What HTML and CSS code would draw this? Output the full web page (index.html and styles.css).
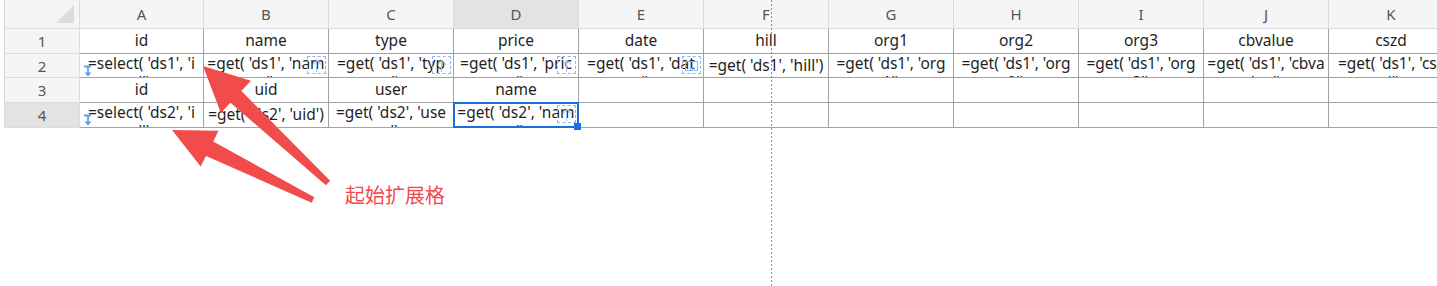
FILE: index.html
```html
<!DOCTYPE html>
<html lang="zh-CN">
<head>
<meta charset="utf-8">
<title>Sheet</title>
<link rel="stylesheet" href="styles.css">
</head>
<body>
<div class="sheet">
  <div class="grid">
    <!-- column header row -->
    <div class="corner"><span class="tri"></span></div>
    <div class="ch">A</div>
    <div class="ch">B</div>
    <div class="ch">C</div>
    <div class="ch sel">D</div>
    <div class="ch">E</div>
    <div class="ch">F</div>
    <div class="ch">G</div>
    <div class="ch">H</div>
    <div class="ch">I</div>
    <div class="ch">J</div>
    <div class="ch">K</div>

    <!-- row 1 -->
    <div class="rh">1</div>
    <div class="c">id</div>
    <div class="c">name</div>
    <div class="c">type</div>
    <div class="c">price</div>
    <div class="c">date</div>
    <div class="c">hill</div>
    <div class="c">org1</div>
    <div class="c">org2</div>
    <div class="c">org3</div>
    <div class="c">cbvalue</div>
    <div class="c">cszd</div>

    <!-- row 2 -->
    <div class="rh">2</div>
    <div class="c w"><span class="down"><svg width="10" height="12" viewBox="0 0 10 12"><path d="M1 1.5H8M5 1.5V8" stroke="#5c9ded" stroke-width="1.8" fill="none"/><path d="M1.5 7.5L5 11.5L8.5 7.5Z" fill="#5c9ded"/></svg></span><span class="l">=select( 'ds1', 'i</span><span class="l">d')</span></div>
    <div class="c w"><span class="fx up"></span><span class="l">=get( 'ds1', 'nam</span><span class="l">e')</span></div>
    <div class="c w"><span class="fx up"></span><span class="l">=get( 'ds1', 'typ</span><span class="l">e')</span></div>
    <div class="c w"><span class="fx up"></span><span class="l">=get( 'ds1', 'pric</span><span class="l">e')</span></div>
    <div class="c w"><span class="fx lr"></span><span class="l">=get( 'ds1', 'dat</span><span class="l">e')</span></div>
    <div class="c">=get( 'ds1', 'hill')</div>
    <div class="c w"><span class="l">=get( 'ds1', 'org</span><span class="l">1')</span></div>
    <div class="c w"><span class="l">=get( 'ds1', 'org</span><span class="l">2')</span></div>
    <div class="c w"><span class="l">=get( 'ds1', 'org</span><span class="l">3')</span></div>
    <div class="c w"><span class="l">=get( 'ds1', 'cbva</span><span class="l">lue')</span></div>
    <div class="c w"><span class="l">=get( 'ds1', 'csz</span><span class="l">d')</span></div>

    <!-- row 3 -->
    <div class="rh">3</div>
    <div class="c">id</div>
    <div class="c">uid</div>
    <div class="c">user</div>
    <div class="c">name</div>
    <div class="c"></div>
    <div class="c"></div>
    <div class="c"></div>
    <div class="c"></div>
    <div class="c"></div>
    <div class="c"></div>
    <div class="c"></div>

    <!-- row 4 -->
    <div class="rh sel">4</div>
    <div class="c w"><span class="down"><svg width="10" height="12" viewBox="0 0 10 12"><path d="M1 1.5H8M5 1.5V8" stroke="#5c9ded" stroke-width="1.8" fill="none"/><path d="M1.5 7.5L5 11.5L8.5 7.5Z" fill="#5c9ded"/></svg></span><span class="l">=select( 'ds2', 'i</span><span class="l">d')</span></div>
    <div class="c">=get( 'ds2', 'uid')</div>
    <div class="c w"><span class="l">=get( 'ds2', 'use</span><span class="l">r')</span></div>
    <div class="c w active"><div class="clip"><span class="fx up"></span><span class="l">=get( 'ds2', 'nam</span><span class="l">e')</span></div><span class="selbox"><span class="handle"></span></span></div>
    <div class="c"></div>
    <div class="c"></div>
    <div class="c"></div>
    <div class="c"></div>
    <div class="c"></div>
    <div class="c"></div>
    <div class="c"></div>
  </div>

  <div class="pagebreak"></div>

  <svg class="annot" width="1437" height="286" viewBox="0 0 1437 286">
    <polygon fill="#f24b4b" points="203,66 250.9,80.7 241.4,90.9 330.1,180.8 325.9,185.2 230.4,102.7 220.9,112.9"/>
    <polygon fill="#f24b4b" points="172,130 218.5,130.8 213.2,141.5 314.3,197.3 311.7,202.7 206,155.9 200.7,166.6"/>
  </svg>
  <div class="label">起始扩展格</div>
</div>
</body>
</html>
```

FILE: styles.css
```css
* { box-sizing: border-box; }

html, body {
  margin: 0;
  padding: 0;
  background: #ffffff;
}

body {
  width: 1437px;
  height: 286px;
  overflow: hidden;
  font-family: "Noto Sans", "Noto Sans CJK SC", sans-serif;
}

.sheet {
  position: relative;
  width: 1437px;
  height: 286px;
  overflow: hidden;
  padding-left: 4px;
}

.grid {
  display: grid;
  grid-template-columns: 75px 124px repeat(10, 125px);
  grid-template-rows: 29px 25px 24px 25px 25px;
  width: 1449px;
  border-left: 1px solid #d9d9d9;
}

.corner,
.ch,
.rh {
  background: #f5f5f5;
  border-right: 1px solid #dcdcdc;
  border-bottom: 1px solid #dcdcdc;
  color: #555555;
  font-size: 15px;
  display: flex;
  align-items: center;
  justify-content: center;
}

.corner {
  position: relative;
}

.tri {
  position: absolute;
  right: 5px;
  bottom: 5px;
  width: 0;
  height: 0;
  border-left: 18px solid transparent;
  border-bottom: 18px solid #dcdcdc;
}

.ch.sel,
.rh.sel {
  background: #e3e3e3;
}

.c {
  position: relative;
  border-right: 1px solid #a3a3a3;
  border-bottom: 1px solid #a3a3a3;
  color: #1f1f1f;
  font-size: 15.5px;
  line-height: 23px;
  text-align: center;
  white-space: nowrap;
  overflow: hidden;
}

.c.w {
  line-height: 18.5px;
}

.c.active {
  overflow: visible;
}

.clip {
  position: relative;
  height: 100%;
  overflow: hidden;
}

.l {
  display: block;
  white-space: nowrap;
}

.down {
  position: absolute;
  left: 3px;
  top: 11px;
  width: 10px;
  height: 12px;
  line-height: 0;
}

.fx {
  position: absolute;
  right: 2px;
  top: 2px;
  width: 19px;
  height: 18px;
  border: 1px dashed #8fb6ee;
}

.fx.up::before {
  content: "";
  position: absolute;
  left: 6px;
  top: 4px;
  width: 5px;
  height: 5px;
  border-left: 1px solid #a9c6f2;
  border-top: 1px solid #a9c6f2;
  transform: rotate(45deg);
}

.fx.up::after {
  content: "";
  position: absolute;
  left: 8px;
  top: 5px;
  width: 1px;
  height: 10px;
  background: #a9c6f2;
}

.fx.lr::before,
.fx.lr::after {
  content: "";
  position: absolute;
  top: 4px;
  width: 6px;
  height: 8px;
  border: 1px solid #8fb6ee;
}

.fx.lr::before { left: 2px; }
.fx.lr::after { right: 2px; }

.selbox {
  position: absolute;
  left: -1px;
  top: -1px;
  right: -1px;
  bottom: -1px;
  border: 2px solid #1a6fe0;
  z-index: 3;
}

.handle {
  position: absolute;
  right: -4px;
  bottom: -4px;
  width: 7px;
  height: 7px;
  background: #1a6fe0;
}

.pagebreak {
  position: absolute;
  left: 771px;
  top: 0;
  width: 1px;
  height: 286px;
  background: repeating-linear-gradient(to bottom, #8c8c8c 0 2px, transparent 2px 4px);
  z-index: 2;
}

.annot {
  position: absolute;
  left: 0;
  top: 0;
  z-index: 4;
  pointer-events: none;
}

.label {
  position: absolute;
  left: 345px;
  top: 184px;
  font-family: "Noto Sans CJK SC", sans-serif;
  font-size: 20px;
  line-height: 22px;
  color: #f2494b;
  z-index: 4;
}
```
